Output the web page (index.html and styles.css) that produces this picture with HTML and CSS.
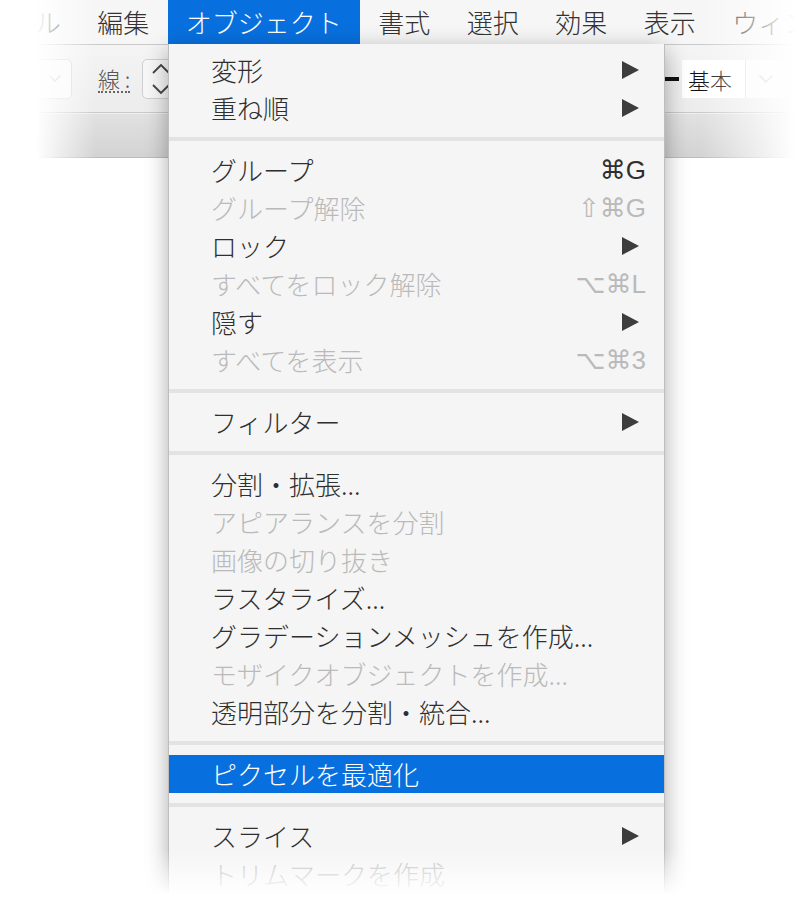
FILE: index.html
```html
<!DOCTYPE html>
<html lang="ja">
<head>
    <meta charset="UTF-8">
    <meta name="viewport" content="width=device-width, initial-scale=1.0">
    <title>オブジェクト メニュー</title>

    <link rel="stylesheet" href="styles.css">
</head>
<body>

<div class="screen">
    <!-- menu bar -->
    <div class="menubar">
        <span class="menutitle">ファイル</span>
        <span class="menutitle">編集</span>
        <span class="menutitle open">オブジェクト</span>
        <span class="menutitle">書式</span>
        <span class="menutitle">選択</span>
        <span class="menutitle">効果</span>
        <span class="menutitle">表示</span>
        <span class="menutitle">ウィンドウ</span>
        <span class="menutitle">ヘルプ</span>
    </div>

    <!-- control bar -->
    <div class="toolbar">
        <div class="selectbox">
            <svg width="12" height="7" viewBox="0 0 12 7"><polyline points="0.5,0.5 6,6 11.5,0.5" fill="none" stroke="#c6c6c6" stroke-width="1.3"/></svg>
        </div>
        <span class="strokelabel">線 :</span>
        <div class="stepper">
            <svg width="18" height="32" viewBox="0 0 18 32"><polyline points="1,10 9,2 17,10" fill="none" stroke="#444" stroke-width="1.8"/><polyline points="1,22 9,30 17,22" fill="none" stroke="#444" stroke-width="1.8"/></svg>
        </div>
        <div class="profile">
            <span class="strokeline"></span>
            <span class="profilename">基本</span>
            <span class="profiledrop">
                <svg width="14" height="8" viewBox="0 0 14 8"><polyline points="0.5,0.5 7,7 13.5,0.5" fill="none" stroke="#c2c2c2" stroke-width="1.3"/></svg>
            </span>
        </div>
    </div>
    <div class="tabbar"></div>

    <!-- the open "object" menu -->
    <div class="dropdown">
        <div class="item"><span>変形</span><span class="sub"></span></div>
        <div class="item"><span>重ね順</span><span class="sub"></span></div>
        <div class="sep"></div>
        <div class="item"><span>グループ</span><span class="key">⌘G</span></div>
        <div class="item off"><span>グループ解除</span><span class="key">⇧⌘G</span></div>
        <div class="item"><span>ロック</span><span class="sub"></span></div>
        <div class="item off"><span>すべてをロック解除</span><span class="key">⌥⌘L</span></div>
        <div class="item"><span>隠す</span><span class="sub"></span></div>
        <div class="item off"><span>すべてを表示</span><span class="key">⌥⌘3</span></div>
        <div class="sep"></div>
        <div class="item"><span>フィルター</span><span class="sub"></span></div>
        <div class="sep"></div>
        <div class="item"><span>分割・拡張...</span></div>
        <div class="item off"><span>アピアランスを分割</span></div>
        <div class="item off"><span>画像の切り抜き</span></div>
        <div class="item"><span>ラスタライズ...</span></div>
        <div class="item"><span>グラデーションメッシュを作成...</span></div>
        <div class="item off"><span>モザイクオブジェクトを作成...</span></div>
        <div class="item"><span>透明部分を分割・統合...</span></div>
        <div class="sep"></div>
        <div class="item active"><span>ピクセルを最適化</span></div>
        <div class="sep"></div>
        <div class="item"><span>スライス</span><span class="sub"></span></div>
        <div class="item off"><span>トリムマークを作成</span></div>
    </div>

    <!-- soft white edges of the capture -->
    <div class="fade"></div>
</div>

</body>
</html>
```

FILE: styles.css
```css
body {
    margin: 0;
    background-color: #ffffff;
    font-family: "Noto Sans CJK JP", "Noto Sans", sans-serif;
}
.screen {
    position: relative;
    width: 795px;
    height: 901px;
    overflow: hidden;
    background-color: #ffffff;
}

/* menu bar */
.menubar {
    display: flex;
    height: 44px;
    margin-left: -61.5px;
    background-color: #f6f6f6;
    border-bottom: 1px solid #c9c9c9;
    white-space: nowrap;
}
.menutitle {
    flex: none;
    padding: 0 18.25px;
    font-size: 26px;
    font-weight: 300;
    line-height: 44px;
    color: #333333;
}
.menutitle.open {
    background-color: #0870de;
    color: #ffffff;
}

/* control bar */
.toolbar {
    display: flex;
    align-items: center;
    height: 67px;
    background: linear-gradient(#f4f4f4, #ececec);
    border-bottom: 1px solid #c9c9c9;
}
.selectbox {
    display: flex;
    align-items: center;
    justify-content: flex-end;
    box-sizing: border-box;
    width: 60px;
    height: 40px;
    margin-left: 12px;
    padding-right: 10px;
    background-color: #f9f9f9;
    border: 1px solid #dadada;
    border-radius: 5px;
}
.strokelabel {
    margin-left: 26px;
    font-size: 22px;
    font-weight: 300;
    line-height: 26px;
    color: #555555;
    border-bottom: 2px dotted #666666;
}
.stepper {
    display: flex;
    align-items: center;
    box-sizing: border-box;
    width: 44px;
    height: 40px;
    margin-left: 12px;
    padding-left: 9px;
    background-color: #f7f7f7;
    border: 1px solid #cfcfcf;
    border-radius: 5px;
}
.profile {
    display: flex;
    align-items: center;
    margin-left: auto;
    margin-right: 10px;
}
.strokeline {
    width: 16px;
    height: 4px;
    margin-right: 3px;
    background-color: #111111;
}
.profilename {
    box-sizing: border-box;
    width: 63px;
    height: 38px;
    padding-left: 6px;
    font-size: 22px;
    font-weight: 300;
    line-height: 38px;
    color: #111111;
    background-color: #ffffff;
}
.profiledrop {
    display: flex;
    align-items: center;
    justify-content: center;
    width: 39px;
    height: 38px;
    background-color: #fbfbfb;
    border-left: 1px solid #e0e0e0;
}
.tabbar {
    height: 43px;
    background: linear-gradient(#e1e1e1, #d3d3d3);
    border-top: 1px solid #f0f0f0;
    border-bottom: 1px solid #bcbcbc;
}

/* dropdown menu */
.dropdown {
    position: absolute;
    top: 44px;
    left: 168px;
    width: 495px;
    height: 900px;
    padding-top: 7px;
    background-color: #f5f5f5;
    border-left: 1px solid #bdbdbd;
    border-right: 1px solid #bdbdbd;
    box-shadow: 0 6px 22px rgba(0, 0, 0, 0.33);
}
.item {
    display: flex;
    align-items: center;
    justify-content: space-between;
    height: 38px;
    padding: 0 18px 0 42px;
    font-size: 26px;
    font-weight: 300;
    line-height: 38px;
    color: #2f2f2f;
    white-space: nowrap;
}
.item.off {
    color: #bababa;
}
.item.active {
    background-color: #0870de;
    color: #ffffff;
}
.sub {
    width: 0;
    height: 0;
    margin-right: 7px;
    border-left: 17px solid #3d3d3d;
    border-top: 9px solid transparent;
    border-bottom: 9px solid transparent;
}
.key {
    font-family: "Liberation Sans", "DejaVu Sans", sans-serif;
    font-size: 26px;
    font-weight: 400;
}
.sep {
    height: 4px;
    margin: 10px 0;
    background-color: #e3e3e3;
}

/* white fade round the edges */
.fade {
    position: absolute;
    top: 0;
    left: 0;
    right: 0;
    bottom: 0;
    pointer-events: none;
    background:
        linear-gradient(to right, #ffffff 36px, rgba(255, 255, 255, 0) 96px),
        linear-gradient(to left, #ffffff 0, rgba(255, 255, 255, 0) 95px),
        linear-gradient(to top, #ffffff 6px, rgba(255, 255, 255, 0) 52px);
}
```
